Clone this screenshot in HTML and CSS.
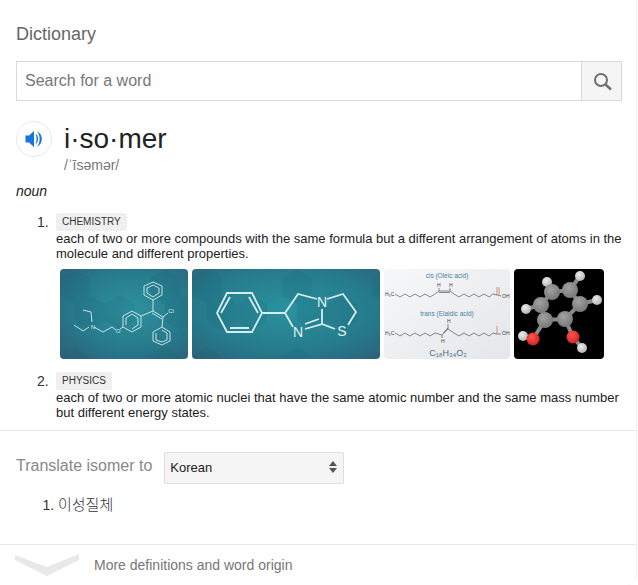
FILE: index.html
```html
<!DOCTYPE html>
<html>
<head>
    <title>Dictionary</title>
    <link rel="stylesheet" href="styles.css">
</head>
<body>
    <div class="card">
        <div class="top">
            <div class="title">Dictionary</div>
            <div class="search">
                <div class="search-input">Search for a word</div>
                <div class="search-btn">
                    <svg width="24" height="24" viewBox="0 0 24 24"><circle cx="11" cy="11" r="6" fill="none" stroke="#707070" stroke-width="2"/><path d="M15.5 15.5L21 20.5" stroke="#707070" stroke-width="2.6" fill="none"/></svg>
                </div>
            </div>
            <div class="headword">
                <div class="speaker">
                    <svg width="20" height="20" viewBox="0 0 20 20"><path d="M1.5 6.5H5L10 2V18L5 13.5H1.5Z" fill="#1a73d8"/><path d="M11.5 5C15 6.5 15 13.5 11.5 15C13 12 13 8 11.5 5Z" fill="#1a73d8"/><path d="M13 2.5C19.5 5 19.5 15 13 17.5C16.5 14 16.5 6 13 2.5Z" fill="#1a73d8"/></svg>
                </div>
                <div>
                    <div class="word">i·so·mer</div>
                    <div class="phonetic">/ˈīsəmər/</div>
                </div>
            </div>
            <div class="pos">noun</div>
            <ol class="senses">
                <li class="sense">
                    <span class="num">1.</span>
                    <div>
                        <span class="tag">CHEMISTRY</span>
                        <div class="def">each of two or more compounds with the same formula but a different arrangement of atoms in the molecule and different properties.</div>
                        <div class="pics">
                            <svg class="pic" width="128" height="90" viewBox="0 0 128 90">
                                <defs>
                                    <radialGradient id="teal1" cx="55%" cy="45%" r="75%"><stop offset="0" stop-color="#2f929e"/><stop offset="0.6" stop-color="#26798a"/><stop offset="1" stop-color="#2f5f78"/></radialGradient>
                                    <pattern id="hex1" width="90" height="78" patternUnits="userSpaceOnUse"><path d="M15 0L30 9V26L15 35L0 26V9ZM30 26L45 35V52L30 61L15 52V35ZM60 26L75 35V52L60 61L45 52V35Z" fill="#145c70" opacity="0.16"/></pattern>
                                </defs>
                                <rect width="128" height="90" fill="url(#teal1)"/>
                                <rect width="128" height="90" fill="url(#hex1)"/>
                                <g fill="none" stroke="#d5eef2" stroke-width="0.9">
                                    <path d="M93 13L102 17V26L93 31L84 26V17ZM93 16L99 19V24L93 28L87 24V19Z"/>
                                    <path d="M93 31V42L103 48L102 58L110 63V72L102 76L93 72V63L102 58M102 61L107 64V71L102 73L96 71V64"/>
                                    <path d="M92 44L102 50M103 48L108 44"/>
                                    <path d="M72 42L81 47V58L72 63L63 58V47ZM72 45L78 49V56L72 60M66 56V49L72 45"/>
                                    <path d="M81 47L93 42M63 58L60 60M56 61L52 58L43 63L34 58M32 53L31 43L23 41M29 58L23 62L14 56"/>
                                </g>
                                <text x="33" y="60" class="atom">N</text>
                                <text x="58" y="64" class="atom">O</text>
                                <text x="111" y="44" class="atom">Cl</text>
                            </svg>
                            <svg class="pic" width="188" height="90" viewBox="0 0 188 90">
                                <defs>
                                    <radialGradient id="teal2" cx="50%" cy="45%" r="75%"><stop offset="0" stop-color="#2b929e"/><stop offset="0.65" stop-color="#25798a"/><stop offset="1" stop-color="#2f6079"/></radialGradient>
                                    <pattern id="hex2" width="90" height="78" patternUnits="userSpaceOnUse"><path d="M15 0L30 9V26L15 35L0 26V9ZM30 26L45 35V52L30 61L15 52V35ZM60 26L75 35V52L60 61L45 52V35Z" fill="#145c70" opacity="0.16"/></pattern>
                                </defs>
                                <rect width="188" height="90" fill="url(#teal2)"/>
                                <rect width="188" height="90" fill="url(#hex2)"/>
                                <g fill="none" stroke="#d5eef2" stroke-width="1.8">
                                    <path d="M35 24H60L70 44L60 63H35L25 44ZM29 44L38 28M57 28L66 44M38 59H57"/>
                                    <path d="M70 44H93L106 25L125 30M93 44L101 58M130 40V55L113 60M127 50L113 55M130 55L143 60M156 56L164 43L151 25L135 30"/>
                                </g>
                                <text x="130" y="38" class="letter">N</text>
                                <text x="106" y="68" class="letter">N</text>
                                <text x="150" y="67" class="letter">S</text>
                            </svg>
                            <svg class="pic" width="126" height="90" viewBox="0 0 126 90">
                                <defs>
                                    <linearGradient id="paper" x1="0" y1="0" x2="1" y2="1"><stop offset="0" stop-color="#f7f8f9"/><stop offset="1" stop-color="#e4e6e9"/></linearGradient>
                                </defs>
                                <rect width="126" height="90" fill="url(#paper)"/>
                                <text x="63" y="9" class="chem-name">cis (Oleic acid)</text>
                                <text x="63" y="47" class="chem-name">trans (Elaidic acid)</text>
                                <text x="64" y="87" class="chem-formula">C₁₈H₃₄O₂</text>
                                <text x="1" y="27" class="chem-atom">H₃C</text>
                                <text x="53" y="18" class="chem-atom">H</text>
                                <text x="65" y="18" class="chem-atom">H</text>
                                <text x="118" y="29" class="chem-atom">OH</text>
                                <text x="1" y="66" class="chem-atom">H₃C</text>
                                <text x="63" y="54" class="chem-atom">H</text>
                                <text x="57" y="74" class="chem-atom">H</text>
                                <text x="118" y="66" class="chem-atom">OH</text>
                                <g fill="none" stroke="#3a3f48" stroke-width="0.6">
                                    <path d="M11 25L16 28L21 25L26 28L31 25L36 28L41 25L46 28L51 25L55 22H66L70 25L75 28L80 25L85 28L90 25L95 28L100 25L105 28L109 25L113 26L117 27"/>
                                    <path d="M55 23.5H66M55 22V19M66 22V19"/>
                                    <path d="M11 64L16 67L21 64L26 67L31 64L36 67L41 64L46 67L51 64L58 66L64 60L70 64L75 67L80 64L85 67L90 64L95 67L100 64L105 67L109 64L113 65L117 65"/>
                                    <path d="M59 64L64 59M58 66V69M64 60V55"/>
                                </g>
                                <path d="M113 26V18M115 26V18M113 65V57" stroke="#c0593b" stroke-width="0.6"/>
                            </svg>
                            <svg class="pic" width="90" height="90" viewBox="0 0 90 90">
                                <defs>
                                    <radialGradient id="grey" cx="40%" cy="35%" r="70%"><stop offset="0" stop-color="#a2a2a2"/><stop offset="1" stop-color="#757575"/></radialGradient>
                                    <radialGradient id="white" cx="40%" cy="35%" r="70%"><stop offset="0" stop-color="#ededed"/><stop offset="1" stop-color="#b0b0b0"/></radialGradient>
                                    <radialGradient id="red" cx="40%" cy="35%" r="70%"><stop offset="0" stop-color="#f55"/><stop offset="1" stop-color="#cf2020"/></radialGradient>
                                </defs>
                                <rect width="90" height="90" fill="#000"/>
                                <g class="soft">
                                    <g stroke="#8a8a8a" stroke-width="4">
                                        <path d="M38 23L56 21L66 35L51 50L31 51L27 36Z"/>
                                        <path d="M38 23L33 13M56 21L66 7M66 35L83 31M27 36L12 40"/>
                                        <path d="M31 51L19 70M51 50L59 68"/>
                                        <path d="M19 70L9 67M59 68L68 79"/>
                                    </g>
                                    <circle cx="33" cy="13" r="5" fill="url(#white)"/>
                                    <circle cx="66" cy="7" r="5" fill="url(#white)"/>
                                    <circle cx="83" cy="31" r="5" fill="url(#white)"/>
                                    <circle cx="12" cy="40" r="5" fill="url(#white)"/>
                                    <circle cx="9" cy="67" r="5" fill="url(#white)"/>
                                    <circle cx="68" cy="79" r="5" fill="url(#white)"/>
                                    <circle cx="38" cy="23" r="8" fill="url(#grey)"/>
                                    <circle cx="56" cy="21" r="8" fill="url(#grey)"/>
                                    <circle cx="66" cy="35" r="8" fill="url(#grey)"/>
                                    <circle cx="51" cy="50" r="8" fill="url(#grey)"/>
                                    <circle cx="31" cy="51" r="8" fill="url(#grey)"/>
                                    <circle cx="27" cy="36" r="8" fill="url(#grey)"/>
                                    <circle cx="19" cy="70" r="6.5" fill="url(#red)"/>
                                    <circle cx="59" cy="68" r="6.5" fill="url(#red)"/>
                                </g>
                            </svg>
                        </div>
                    </div>
                </li>
                <li class="sense">
                    <span class="num">2.</span>
                    <div>
                        <span class="tag">PHYSICS</span>
                        <div class="def">each of two or more atomic nuclei that have the same atomic number and the same mass number but different energy states.</div>
                    </div>
                </li>
            </ol>
        </div>
        <div class="translate">
            <div class="translate-row">
                <span class="translate-label">Translate isomer to</span>
                <div class="lang-select">
                    <span>Korean</span>
                    <svg width="8" height="12" viewBox="0 0 8 12"><path d="M4 0L8 5H0ZM4 12L0 7H8Z" fill="#555"/></svg>
                </div>
            </div>
            <ol class="trans-list">
                <li><span class="hangul">이성질체</span></li>
            </ol>
        </div>
        <div class="more">
            <svg width="64" height="24" viewBox="0 0 64 24"><path d="M0 2L32 14L64 1V7L32 23L0 7Z" fill="#e8e8e8"/></svg>
            <span class="more-text">More definitions and word origin</span>
        </div>
    </div>
</body>
</html>
```

FILE: styles.css
```css
body {
    margin: 0;
    background: #fff;
    font-family: "Liberation Sans", "Noto Sans CJK KR", sans-serif;
    color: #222;
}

.card {
    width: 637px;
    height: 585px;
    box-sizing: border-box;
    border-right: 1px solid #eee;
    border-radius: 0 0 10px 10px;
    overflow: hidden;
}

.top {
    padding: 24px 16px 0;
    height: 406px;
    box-sizing: border-box;
}

.title {
    font-size: 18px;
    line-height: 20px;
    color: #666;
}

.search {
    display: flex;
    width: 606px;
    height: 40px;
    margin-top: 17px;
    box-sizing: border-box;
    border: 1px solid #d9d9d9;
}

.search-input {
    flex: 1;
    padding-left: 8px;
    font-size: 16px;
    line-height: 37px;
    color: #777;
}

.search-btn {
    width: 40px;
    box-sizing: border-box;
    display: flex;
    align-items: center;
    justify-content: center;
    background: #f5f5f5;
    border-left: 1px solid #d9d9d9;
}

.headword {
    display: flex;
    gap: 12px;
    margin-top: 20px;
}

.speaker {
    width: 36px;
    height: 36px;
    box-sizing: border-box;
    border: 1px solid #e8e8e8;
    border-radius: 50%;
    display: flex;
    align-items: center;
    justify-content: center;
}

.word {
    font-size: 28px;
    line-height: 36px;
    color: #222;
}

.phonetic {
    font-size: 14px;
    line-height: 16px;
    color: #777;
}

.pos {
    margin-top: 9px;
    font-size: 14px;
    line-height: 18px;
    font-style: italic;
    color: #222;
}

.senses {
    margin: 13px 0 0;
    padding: 0 0 0 21px;
    list-style: none;
}

.sense {
    display: grid;
    grid-template-columns: 19px 1fr;
    margin-bottom: 13px;
}

.num {
    font-size: 14px;
    line-height: 18px;
    color: #333;
}

.tag {
    display: block;
    width: fit-content;
    padding: 0 6px;
    font-size: 10px;
    line-height: 18px;
    color: #333;
    background: #efefef;
    border-radius: 2px;
}

.def {
    margin-right: -6px;
    font-size: 13px;
    line-height: 15px;
    color: #222;
}

.pics {
    display: flex;
    gap: 4px;
    margin: 8px 0 0 4px;
}

.pic {
    display: block;
    flex: none;
    border-radius: 4px;
}

.soft {
    filter: blur(0.5px);
}

.atom {
    font-size: 6px;
    text-anchor: middle;
    fill: #d5eef2;
}

.letter {
    font-size: 14px;
    text-anchor: middle;
    fill: #e2f3f5;
}

.chem-name {
    font-size: 6.5px;
    fill: #4a7fa5;
    text-anchor: middle;
}

.chem-formula {
    font-size: 9px;
    fill: #4a6f8f;
    text-anchor: middle;
}

.chem-atom {
    font-size: 5px;
    fill: #3a3f48;
}

.translate {
    height: 114px;
    margin-top: 24px;
    box-sizing: border-box;
    border-top: 1px solid #e8e8e8;
    padding: 21px 16px 0;
}

.translate-row {
    display: flex;
    align-items: flex-start;
    gap: 12px;
}

.translate-label {
    font-size: 16px;
    line-height: 28px;
    color: #888;
}

.lang-select {
    width: 180px;
    height: 32px;
    box-sizing: border-box;
    display: flex;
    align-items: center;
    justify-content: space-between;
    padding: 0 6px 2px 5px;
    font-size: 13px;
    color: #222;
    background: #f5f5f5;
    border: 1px solid #dedede;
    border-radius: 2px;
}

.trans-list {
    margin: 12px 0 0;
    padding: 0 0 0 42px;
    font-size: 14px;
    line-height: 18px;
    color: #333;
}

.hangul {
    font-size: 15px;
    font-weight: 300;
}

.more {
    height: 41px;
    box-sizing: border-box;
    display: flex;
    align-items: center;
    gap: 15px;
    padding-left: 15px;
    border-top: 1px solid #e8e8e8;
    font-size: 14px;
    color: #777;
}

.more-text {
    margin-top: -1px;
}
```
